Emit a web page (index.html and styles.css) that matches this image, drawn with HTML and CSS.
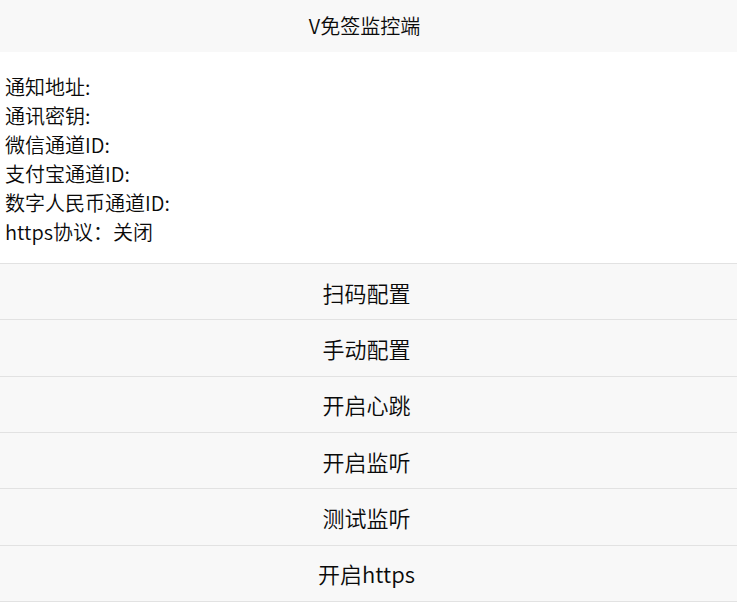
FILE: index.html
```html
<!DOCTYPE html>
<html lang="zh-CN">
<head>
<meta charset="utf-8">
<title>V免签监控端</title>
<link rel="stylesheet" href="styles.css">
</head>
<body>
<header class="title-bar">V免签监控端</header>
<section class="info">
  <div class="info-line">通知地址:</div>
  <div class="info-line">通讯密钥:</div>
  <div class="info-line">微信通道ID:</div>
  <div class="info-line">支付宝通道ID:</div>
  <div class="info-line">数字人民币通道ID:</div>
  <div class="info-line">https协议：关闭</div>
</section>
<nav class="actions">
  <div class="action">扫码配置</div>
  <div class="action">手动配置</div>
  <div class="action">开启心跳</div>
  <div class="action">开启监听</div>
  <div class="action">测试监听</div>
  <div class="action">开启https</div>
</nav>
</body>
</html>
```
FILE: styles.css
```css
* { box-sizing: border-box; }
html, body {
  margin: 0;
  padding: 0;
  background: #ffffff;
}
body {
  font-family: "Noto Sans CJK SC", "Noto Sans", sans-serif;
  font-weight: 350;
  color: #0a0a0a;
}
.title-bar {
  height: 52px;
  line-height: 52px;
  padding-right: 8px;
  background: #f8f8f8;
  text-align: center;
  font-size: 20px;
}
.info {
  padding: 20px 5px 17px 5px;
  font-size: 20px;
  line-height: 29px;
}
.actions {
  display: flex;
  flex-direction: column;
  border-bottom: 1px solid #e2e2e2;
}
.action {
  height: 56.33px;
  padding-right: 4px;
  border-top: 1px solid #e2e2e2;
  background: #f8f8f8;
  display: flex;
  align-items: center;
  justify-content: center;
  font-size: 22px;
}
```
